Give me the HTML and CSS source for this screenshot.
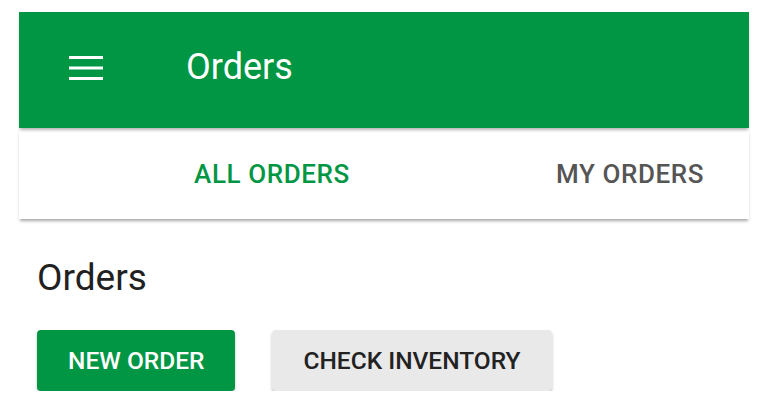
FILE: index.html
```html
<!DOCTYPE html>
<html>
<head>
<meta charset="utf-8">
<link rel="stylesheet" href="styles.css">
</head>
<body>
<div class="app">
  <header class="appbar">
    <button class="menu-btn" aria-label="menu">
      <svg width="34" height="24" viewBox="0 0 34 24">
        <rect x="0" y="0" width="34" height="3" fill="#fff"/>
        <rect x="0" y="10.5" width="34" height="3" fill="#fff"/>
        <rect x="0" y="21" width="34" height="3" fill="#fff"/>
      </svg>
    </button>
    <h1 class="appbar-title">Orders</h1>
  </header>
  <nav class="tabs">
    <div class="tab tab-active">ALL ORDERS</div>
    <div class="tab">MY ORDERS</div>
  </nav>
  <main class="content">
    <h2 class="page-title">Orders</h2>
    <div class="actions">
      <button class="btn btn-primary">NEW ORDER</button>
      <button class="btn btn-default">CHECK INVENTORY</button>
    </div>
  </main>
</div>
</body>
</html>
```

FILE: styles.css
```css
html, body {
  margin: 0;
  padding: 0;
  background: #ffffff;
}
body {
  font-family: Roboto, "Liberation Sans", sans-serif;
  padding: 12px 22px 0 19px;
  overflow: hidden;
}
.app {
  width: 730px;
}
.appbar {
  position: relative;
  z-index: 2;
  height: 110px;
  padding-bottom: 6px;
  background: #009644;
  display: flex;
  align-items: center;
  box-shadow: 0 3px 3px -1px rgba(0, 0, 0, 0.3);
}
.menu-btn {
  margin: 2px 0 0 50px;
  padding: 0;
  border: 0;
  background: transparent;
  width: 34px;
  height: 24px;
  display: flex;
}
.appbar-title {
  margin: 0 0 0 83px;
  font-size: 36px;
  line-height: 36px;
  font-weight: 400;
  color: #ffffff;
}
.tabs {
  position: relative;
  z-index: 1;
  height: 91px;
  background: #ffffff;
  display: flex;
  padding-left: 74px;
  overflow: hidden;
  box-shadow: 0 3px 3px -1px rgba(0, 0, 0, 0.35);
}
.tab {
  flex: 0 0 358px;
  display: flex;
  align-items: center;
  justify-content: center;
  font-size: 26px;
  letter-spacing: 0.6px;
  font-weight: 500;
  color: #555555;
}
.tab-active {
  color: #009644;
}
.content {
  padding: 40px 0 0 18px;
}
.page-title {
  margin: 0;
  font-size: 37px;
  line-height: 37px;
  font-weight: 400;
  color: #212121;
}
.actions {
  margin-top: 34px;
  display: flex;
  gap: 37px;
}
.btn {
  height: 61px;
  padding: 0 31px;
  border: 0;
  border-radius: 4px;
  font-family: Roboto, "Liberation Sans", sans-serif;
  font-size: 24.5px;
  font-weight: 500;
  box-shadow: 0 2px 3px rgba(0, 0, 0, 0.25);
}
.btn-primary {
  background: #009644;
  color: #ffffff;
}
.btn-default {
  background: #e9e9e9;
  color: #222222;
}
```
